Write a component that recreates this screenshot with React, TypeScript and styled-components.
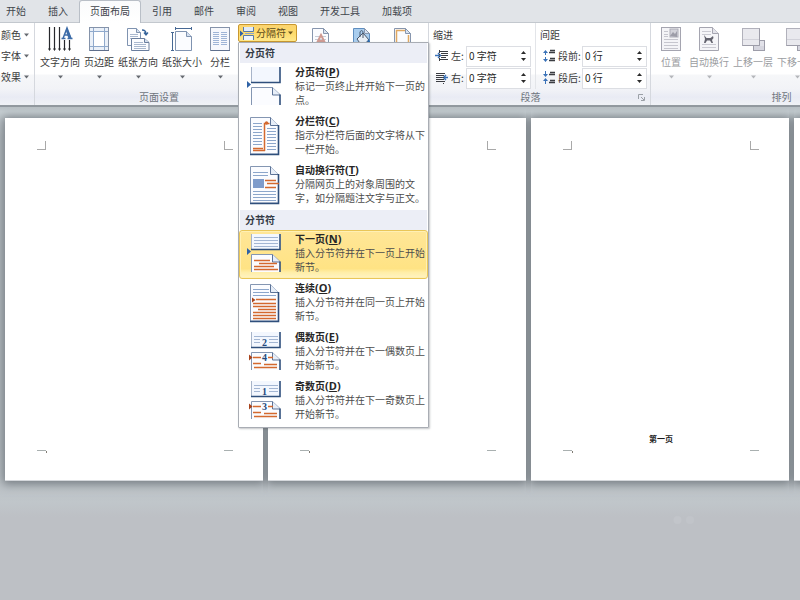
import React from "react";
import styled, { createGlobalStyle, css } from "styled-components";

const GlobalStyle = createGlobalStyle`
  * { box-sizing: border-box; }
  html, body { margin: 0; padding: 0; }
  body, button, input {
    font-family: "Noto Sans CJK SC", sans-serif;
    font-size: 10px;
    line-height: 14px;
    color: #3b3b3b;
  }
  button { margin: 0; padding: 0; border: 0; background: none; }
`;

const Window = styled.div`
  display: flex;
  flex-direction: column;
  min-height: 100vh;
  overflow: hidden;
  background: #bdc0c5;
`;

const TabBar = styled.nav`
  display: flex;
  height: 23px;
  margin-left: -5px;
  background: #e1e4e8;
  box-shadow: inset 0 -1px 0 #c3c8ce;
`;

const Tab = styled.button<{ $active?: boolean }>`
  flex: none;
  padding: 0 11px 2px;
  white-space: nowrap;
  color: #3f444b;
  ${(p) =>
    p.$active &&
    css`
      padding: 0 10px 2px;
      background: linear-gradient(#fafbfc, #ffffff);
      border: 1px solid #b9bfc7;
      border-bottom: 0;
      border-radius: 3px 3px 0 0;
    `}
`;

const Ribbon = styled.div`
  display: flex;
  height: 84px;
  background: linear-gradient(#ffffff 0, #ffffff 51px, #f6f7f9 52px, #f2f3f7 66px, #e9ebf4 74px, #f0f2f6 82px);
  border-bottom: 2px solid #92999f;
`;

const Group = styled.section<{ $width: number; $plain?: boolean }>`
  flex: none;
  display: flex;
  flex-direction: column;
  width: ${(p) => p.$width}px;
  border-right: 1px solid ${(p) => (p.$plain ? "transparent" : "#d5d8de")};
`;

const GroupBody = styled.div<{ $pad?: number; $gap?: number }>`
  flex: 1;
  display: flex;
  align-items: flex-start;
  gap: ${(p) => p.$gap ?? 4}px;
  padding-left: ${(p) => p.$pad ?? 5}px;
`;

const GroupCaption = styled.div`
  display: flex;
  height: 15px;
  color: #6f757d;
`;

const CaptionText = styled.span`
  flex: 1;
  text-align: center;
`;

const Launcher = styled.button`
  width: 18px;
  height: 14px;
  display: grid;
  place-items: center;
`;

const ThemeList = styled.div`
  display: flex;
  flex-direction: column;
  gap: 7px;
  padding-top: 5px;
`;

const ThemeButton = styled.button`
  display: flex;
  align-items: center;
  gap: 2px;
  white-space: nowrap;
`;

const BigButton = styled.button<{ $width: number; $dim?: boolean }>`
  flex: none;
  display: flex;
  flex-direction: column;
  align-items: center;
  width: ${(p) => p.$width}px;
  padding-top: 3px;
  white-space: nowrap;
  color: ${(p) => (p.$dim ? "#9b9da1" : "#3b3b3b")};
  & > span { margin: 3px 0 5px; }
`;

const Caret = ({ color = "#666a70" }: { color?: string }) => (
  <svg width="7" height="6" viewBox="0 0 7 6" aria-hidden="true">
    <path d="M1 1.500h5L3.500 4.500z" fill={color} />
  </svg>
);

const BreakAnchor = styled.div`
  position: relative;
  padding-top: 1px;
`;

const BreakButton = styled.button`
  display: flex;
  align-items: center;
  justify-content: space-between;
  width: 59px;
  height: 18px;
  padding: 0 2px 0 1px;
  white-space: nowrap;
  color: #5b4a1c;
  border: 1px solid #c9982f;
  border-radius: 2px;
  background: linear-gradient(#fbd46f, #fddb6c 50%, #ffe88a);
`;

const Menu = styled.div`
  position: absolute;
  z-index: 2;
  top: 19px;
  left: 0;
  width: 191px;
  padding-bottom: 1px;
  background: #ffffff;
  border: 1px solid #a9adb4;
  border-radius: 1px;
  box-shadow: 1px 1px 2px rgba(60, 66, 74, 0.3);
`;

const MenuHeading = styled.h2`
  margin: 0 1px;
  padding: 3px 0 3px 5px;
  font-size: 10px;
  line-height: 14px;
  font-weight: 700;
  color: #333a45;
  background: #eceef6;
`;

const MenuItem = styled.button<{ $selected?: boolean }>`
  display: grid;
  grid-template-columns: 40px auto;
  column-gap: 9px;
  align-items: start;
  width: 100%;
  height: 49px;
  padding: 1px 0 0 6px;
  text-align: left;
  border: 1px solid transparent;
  border-radius: 3px;
  ${(p) =>
    p.$selected &&
    css`
      border-color: #e9c658;
      background: linear-gradient(#ffe697, #ffe384 80%, #ffeea8 88%, #fff3c2);
      box-shadow: inset 0 0 0 1px #fff0b4;
    `}
`;

const ItemTitle = styled.strong`
  display: block;
  font-weight: 700;
  color: #262626;
`;

const AccessKey = styled.span`
  font-family: "Open Sans", sans-serif;
  font-size: 11px;
`;

const ItemText = styled.span`
  display: block;
  white-space: pre;
  color: #4c4c4c;
`;

const IconStrip = styled.div`
  display: flex;
  gap: 19px;
  padding: 4px 0 0 8px;
`;

const IconButton = styled.button`
  width: 22px;
  height: 24px;
`;

const Fields = styled.div<{ $divided?: boolean }>`
  flex: none;
  display: flex;
  flex-direction: column;
  padding: 5px 4px 0 0;
  border-right: 1px solid ${(p) => (p.$divided ? "#e3e5e9" : "transparent")};
`;

const FieldRow = styled.div`
  display: flex;
  align-items: center;
  height: 22px;
  padding-left: 2px;
`;

const FieldsTitle = styled.span`
  height: 17px;
`;

const FieldLabel = styled.label<{ $width: number }>`
  width: ${(p) => p.$width}px;
  padding-left: 2px;
  white-space: nowrap;
`;

const Spinner = styled.div`
  display: flex;
  width: 65px;
  height: 21px;
  background: #ffffff;
  border: 1px solid #dcdee3;
`;

const SpinnerInput = styled.input`
  flex: 1;
  min-width: 0;
  padding: 0 2px 1px;
  border: 0;
  outline: 0;
  background: transparent;
  color: #1f1f1f;
`;

const SpinnerArrows = styled.div`
  display: flex;
  flex-direction: column;
  width: 14px;
  padding: 2px 0;
`;

const SpinnerArrow = styled.button`
  flex: 1;
  display: grid;
  place-items: center;
`;

const Workspace = styled.main`
  flex: 1;
  background: linear-gradient(#b9c1c5 0, #c6ced2 5px, #b4babf 30px, #b4babf 340px, #c0c6ca 395px, #bdc0c5 410px);
`;

const Pages = styled.div`
  display: flex;
  gap: 5px;
  padding: 11px 0 0 5px;
`;

const Page = styled.article`
  flex: none;
  display: grid;
  grid-template-columns: 9px 1fr 9px;
  grid-template-rows: 9px 1fr 9px;
  width: 258px;
  height: 363px;
  padding: 23px 30px 22px 32px;
  background: #ffffff;
  border-bottom: 1px solid #d5d8dc;
  box-shadow: 0 1px 9px 2px #757c82;
  clip-path: inset(-12px -5px -30px -5px);
`;

const Corner = styled.i<{ $side: "left" | "right" }>`
  border-bottom: 1px solid #a9a9a9;
  border-${(p) => (p.$side === "left" ? "right" : "left")}: 1px solid #a9a9a9;
`;

const PageText = styled.p`
  grid-row: 2;
  grid-column: 1 / -1;
  align-self: end;
  margin: 0 0 4px;
  font-size: 8px;
  line-height: 12px;
  min-height: 12px;
  font-weight: 700;
  text-align: center;
  color: #1c1c1c;
`;

const FootMark = styled.i`
  grid-row: 3;
  height: 1px;
  margin-top: 1px;
  background: #a9b0b0;
`;

const FootCenter = styled.i`
  grid-row: 3;
  width: 1px;
  height: 2px;
  margin-top: 2px;
  background: #817c74;
`;

const Watermark = styled.div`
  display: flex;
  justify-content: flex-end;
  padding: 34px 105px 0 0;
`;

/* ---------- icons ---------- */

const sheet = { fill: "#fbfcff", stroke: "#7f93b0", strokeWidth: 1 };

const hLines = (x1: number, x2: number, ys: number[], color: string) =>
  ys.map((y) => <path key={`${x1}-${y}`} d={`M${x1} ${y + 0.5}H${x2}`} stroke={color} />);

const TextDirectionIcon = () => (
  <svg width="26" height="26" viewBox="0 0 26 26">
    <path d="M2.500 1v23M7.500 1v23M12.500 1v23M17.500 14v10M22.500 14v10" stroke="#26282c" strokeWidth="1.200" />
    <path d="M1 22.500h3L2.500 25zM6 22.500h3L7.500 25zM11 22.500h3L12.500 25zM16 22.500h3L17.500 25zM21 22.500h3L22.500 25z" fill="#26282c" />
    <path d="M14.500 12.500h4M20.500 12.500h5M16 12.500L20 2l4 10.500M17.500 9h5" fill="none" stroke="#3d6ca8" strokeWidth="1.500" />
    <path d="M20 1.500l4.500 11h-3L18.800 4.500z" fill="#3d6ca8" />
  </svg>
);

const MarginsIcon = () => (
  <svg width="22" height="26" viewBox="0 0 22 26">
    <rect x="1.500" y="1.500" width="19" height="23" fill="#eaf0f8" stroke="#8593aa" />
    <rect x="6" y="6" width="10" height="14" fill="#ffffff" />
    <path d="M5.500 2v22M16.500 2v22M2 5.500h18M2 20.500h18" stroke="#8fa9cc" />
    <path d="M2 24.500h19" stroke="#5f6f8c" />
  </svg>
);

const OrientationIcon = () => (
  <svg width="26" height="26" viewBox="0 0 26 26">
    <path d="M2.500 2.500h9l4 4v13h-13z" {...sheet} />
    <path d="M11.500 2.500v4h4" fill="#d5e0f0" stroke="#7f93b0" />
    {hLines(5, 13, [8, 10, 12], "#a9b8cf")}
    <path d="M17 4c3 0 4 1 4 4M19 6.500l2 2.500 2-2.500" fill="none" stroke="#37649b" strokeWidth="1.300" />
    <path d="M6.500 12.500h13l4.500 4v8H6.500z" {...sheet} stroke="#6a7e9e" />
    <path d="M19.500 12.500v4h4.500" fill="#d5e0f0" stroke="#6a7e9e" />
    {hLines(9, 18, [16], "#a9b8cf")}
    {hLines(9, 21, [18, 20, 22], "#a9b8cf")}
  </svg>
);

const SizeIcon = () => (
  <svg width="24" height="26" viewBox="0 0 24 26">
    <path d="M5.500 5.500h11l5 5v14h-16z" {...sheet} />
    <path d="M16.500 5.500v5h5" fill="#d5e0f0" stroke="#7f93b0" />
    <path d="M5 2.500h17M5.500 1v3M21.500 1v3M2.500 6v19M1 6.500h3M1 24.500h3" stroke="#466894" />
  </svg>
);

const ColumnsIcon = () => (
  <svg width="22" height="26" viewBox="0 0 22 26">
    <rect x="1.500" y="1.500" width="19" height="23" fill="#f6f8fc" stroke="#8593aa" />
    {hLines(4, 10, [6, 8, 10, 12, 14, 16, 18], "#9fb5d6")}
    {hLines(12, 18, [6, 8, 10, 12, 14, 16, 18], "#9fb5d6")}
    <path d="M2 24.500h19" stroke="#5f6f8c" />
  </svg>
);

const BreakIcon = () => (
  <svg width="15" height="15" viewBox="0 0 15 15">
    <path d="M3.500 1v4.500h10V1z" fill="#dfeaf8" />
    <path d="M3.500 14V9.500h10V14z" fill="#eef4fc" />
    <path d="M3.500 1v4.500h10V1M3.500 14V9.500h10V14" fill="none" stroke="#5779a8" />
    <path d="M0 4.500L3.500 7.500 0 10.500z" fill="#2f62a6" />
    <path d="M5 7.500h9" stroke="#87a3cc" />
  </svg>
);

const SmallSheet = ({ children, stroke = "#8796ae" }: { children: React.ReactNode; stroke?: string }) => (
  <svg width="22" height="24" viewBox="0 0 22 24">
    <path d="M2.500 1.500h11l5 5v17h-16z" fill="#fbfcff" stroke={stroke} />
    {children}
    <path d="M13.500 1.500v5h5z" fill="#d9e3f1" stroke="#8796ae" />
  </svg>
);

const TallSheet = () => (
  <>
    <path d="M4.500 3.500h20l8 8V40h-28z" fill="#fbfcff" stroke="#8496b2" />
    <path d="M24.500 3.500v8h8" fill="#e7eef8" stroke="#5c7397" />
    <path d="M32.500 11v29.500H4" fill="none" stroke="#2f4f7c" strokeWidth="1.600" />
  </>
);

const SplitSheets = ({ children, arrow = true }: { children?: React.ReactNode; arrow?: boolean }) => (
  <svg width="40" height="44" viewBox="0 0 40 44">
    <path d="M5.500 2h29v15h-29z" fill="#f3f7fe" />
    <path d="M5.500 2v15" stroke="#a7b4c9" />
    <path d="M34 2v15.500H5" fill="none" stroke="#2f4f7c" strokeWidth="1.600" />
    <path d="M5.500 40V22.500h21l7.500 7.500v10z" fill="#fbfcff" />
    <path d="M5.500 40V22.500h21l8 7.500" fill="none" stroke="#8496b2" />
    <path d="M26.500 22.500V30H34" fill="#e7eef8" stroke="#5c7397" />
    <path d="M34 29.500V40" stroke="#2f4f7c" strokeWidth="1.600" />
    {arrow && <path d="M1 16l4 3.500L1 23z" fill="#2f62a6" />}
    {children}
  </svg>
);

const PageBreakArt = () => <SplitSheets />;

const ColumnBreakArt = () => (
  <svg width="40" height="44" viewBox="0 0 40 44">
    <TallSheet />
    {hLines(7, 16, [9, 12, 15, 18, 21, 24, 27, 30], "#8ca6cb")}
    {hLines(21, 30, [14, 17, 20, 23, 26, 29, 32, 35], "#8ca6cb")}
    <path d="M7 34.500h10M7 36.500h12M18.500 37V9.500h5" fill="none" stroke="#d4692f" strokeWidth="1.500" />
    <circle cx="20.500" cy="9" r="1.700" fill="#d4692f" />
  </svg>
);

const WrapBreakArt = () => (
  <svg width="40" height="44" viewBox="0 0 40 44">
    <TallSheet />
    {hLines(7, 22, [9, 12], "#8ca6cb")}
    <rect x="7" y="16" width="11" height="9" fill="#7f9ccb" />
    <path d="M19 17.500h11M21 20.500h12M19 24.500h11" stroke="#d4692f" strokeWidth="1.400" />
    {hLines(7, 30, [28, 31, 34, 37], "#8ca6cb")}
  </svg>
);

const NextPageArt = () => (
  <SplitSheets>
    {hLines(8, 32, [5, 8, 11, 14], "#a3b6d3")}
    <path d="M8 28.500h16M13 31.500h18M8 34.500h20M8 37.500h24" stroke="#d4692f" strokeWidth="1.300" />
  </SplitSheets>
);

const ContinuousArt = () => (
  <svg width="40" height="44" viewBox="0 0 40 44">
    <TallSheet />
    {hLines(7, 23, [8, 11], "#8ca6cb")}
    {hLines(7, 30, [14], "#8ca6cb")}
    <path d="M6 16.500l3.500 2.500L6 21.500z" fill="#a8431b" />
    <path d="M10 18.500h20M7 22.500h23M7 25.500h23M12 28.500h18M7 31.500h23M7 34.500h23M7 37.500h23" stroke="#d4692f" strokeWidth="1.300" />
  </svg>
);

const NumberedArt = ({ top, bottom }: { top: string; bottom: string }) => (
  <SplitSheets arrow={false}>
    {hLines(8, 32, [6], "#a3b6d3")}
    {hLines(8, 14, [9, 12], "#a3b6d3")}
    {hLines(23, 32, [9, 12], "#a3b6d3")}
    <text x="18.500" y="16" textAnchor="middle" fontSize="10" fontWeight="700" fontFamily="Liberation Serif, serif" fill="#24497d">
      {top}
    </text>
    <path d="M3 24.500l3.500 3-3.500 3z" fill="#a8431b" />
    <path d="M7 27.500h8M22 27.500h5M7 33.500h8M18 34.500h13M8 37.500h23" stroke="#d4692f" strokeWidth="1.300" />
    <text x="18.500" y="31" textAnchor="middle" fontSize="10" fontWeight="700" fontFamily="Liberation Serif, serif" fill="#24497d">
      {bottom}
    </text>
  </SplitSheets>
);

const IndentIcon = ({ right }: { right?: boolean }) => (
  <svg width="14" height="14" viewBox="0 0 14 14">
    {right ? (
      <>
        <path d="M1 2.500h9M1 4.500h7M1 6.500h7M1 8.500h7M1 10.500h9" stroke="#3b3d42" />
        <path d="M13 6.500H9M11 4L8.500 6.500 11 9" fill="none" stroke="#3a72b8" strokeWidth="1.400" />
        <path d="M8.500 2v11" stroke="#3b3d42" strokeDasharray="1 1" />
      </>
    ) : (
      <>
        <path d="M4 2.500h9M6 4.500h7M6 6.500h7M6 8.500h5M4 10.500h9" stroke="#3b3d42" />
        <path d="M0 6.500h5M3 4l2.500 2.500L3 9" fill="none" stroke="#3a72b8" strokeWidth="1.400" />
        <path d="M4.500 1v12" stroke="#3b3d42" strokeDasharray="1 1" />
      </>
    )}
  </svg>
);

const SpacingIcon = ({ after }: { after?: boolean }) => (
  <svg width="14" height="14" viewBox="0 0 14 14">
    {after ? (
      <path d="M1 3h5L3.500 6zM1 10h5L3.500 7zM3 0h1v3H3zM3 10h1v3H3z" fill="#3a72b8" />
    ) : (
      <path d="M1 4h5L3.500 1zM1 10h5L3.500 13zM3 4h1v2H3zM3 8h1v2H3z" fill="#3a72b8" />
    )}
    <path d="M8 1.500h5M7 3.500h6M8 9.500h5M7 11.500h6" stroke="#3b3d42" strokeWidth="1.300" />
  </svg>
);

const LauncherIcon = () => (
  <svg width="7" height="7" viewBox="0 0 7 7">
    <path d="M.5 5V.5H5M3 3l3 3M6.500 3v3.500H3" fill="none" stroke="#9ba0a7" />
  </svg>
);

const PositionIcon = () => (
  <svg width="22" height="26" viewBox="0 0 22 26">
    <rect x="1.500" y="1.500" width="19" height="23" fill="#f4f4f7" stroke="#a5a5b0" />
    <rect x="10" y="3" width="8" height="8" fill="#d3d3da" stroke="#adadb8" />
    <path d="M10 10l3-4 2 2 2-3v6z" fill="#9d9da8" />
    {hLines(4, 8, [5, 8, 10], "#c6c6ce")}
    {hLines(4, 18, [13, 16, 19, 22], "#c6c6ce")}
  </svg>
);

const WrapIcon = () => (
  <svg width="22" height="26" viewBox="0 0 22 26">
    <path d="M1.500 1.500h13l6 6v17h-19z" fill="#f5f5f8" stroke="#a5a5b0" />
    <path d="M14.500 1.500v6h6" fill="#e3e3ea" stroke="#a5a5b0" />
    {hLines(4, 13, [5, 8], "#cacad2")}
    {hLines(4, 18, [18, 21], "#cacad2")}
    <path d="M6 9l2.500 3h4L15 10l.5 2-1.500 2 1 3h-1.500l-1.500-2.500H9L7.500 17H6l1-4z" fill="#62626d" />
  </svg>
);

const LayerIcon = () => (
  <svg width="26" height="26" viewBox="0 0 26 26">
    <rect x="13.500" y="14.500" width="11" height="10" fill="#e2e2e9" stroke="#9d9da9" />
    <rect x="2.500" y="2.500" width="17" height="17" fill="#e9e9ee" stroke="#b1b1bb" />
    <path d="M3 13.500h16" stroke="#d2d2da" />
    <path d="M2.500 19.500h17v-17" fill="none" stroke="#9d9da9" />
    <path d="M14 20h10v4H14z" fill="#d6d6df" />
  </svg>
);

/* ---------- data ---------- */

const tabs = ["开始", "插入", "页面布局", "引用", "邮件", "审阅", "视图", "开发工具", "加载项"];

const setupButtons = [
  { label: "文字方向", width: 40, icon: <TextDirectionIcon /> },
  { label: "页边距", width: 30, icon: <MarginsIcon /> },
  { label: "纸张方向", width: 40, icon: <OrientationIcon /> },
  { label: "纸张大小", width: 40, icon: <SizeIcon /> },
  { label: "分栏", width: 28, icon: <ColumnsIcon /> },
];

const arrangeButtons = [
  { label: "位置", width: 28, icon: <PositionIcon /> },
  { label: "自动换行", width: 40, icon: <WrapIcon /> },
  { label: "上移一层", width: 40, icon: <LayerIcon /> },
  { label: "下移一层", width: 40, icon: <LayerIcon /> },
];

const menuSections = [
  {
    title: "分页符",
    items: [
      { name: "分页符", key: "P", text: "标记一页终止并开始下一页的\n点。", art: <PageBreakArt /> },
      { name: "分栏符", key: "C", text: "指示分栏符后面的文字将从下\n一栏开始。", art: <ColumnBreakArt /> },
      { name: "自动换行符", key: "T", text: "分隔网页上的对象周围的文\n字，如分隔题注文字与正文。", art: <WrapBreakArt /> },
    ],
  },
  {
    title: "分节符",
    items: [
      { name: "下一页", key: "N", text: "插入分节符并在下一页上开始\n新节。", art: <NextPageArt />, selected: true },
      { name: "连续", key: "O", text: "插入分节符并在同一页上开始\n新节。", art: <ContinuousArt /> },
      { name: "偶数页", key: "E", text: "插入分节符并在下一偶数页上\n开始新节。", art: <NumberedArt top="2" bottom="4" /> },
      { name: "奇数页", key: "D", text: "插入分节符并在下一奇数页上\n开始新节。", art: <NumberedArt top="1" bottom="3" /> },
    ],
  },
];

const pages = ["", "", "第一页", ""];

/* ---------- parts ---------- */

type FieldProps = { id: string; label: string; value: string; icon: React.ReactNode; labelWidth: number };

const SpinField = ({ id, label, value, icon, labelWidth }: FieldProps) => (
  <FieldRow>
    {icon}
    <FieldLabel htmlFor={id} $width={labelWidth}>
      {label}
    </FieldLabel>
    <Spinner>
      <SpinnerInput id={id} defaultValue={value} />
      <SpinnerArrows>
        <SpinnerArrow aria-label="增加">
          <svg width="5" height="3" viewBox="0 0 5 3"><path d="M0 3h5L2.500 0z" fill="#2b2b2b" /></svg>
        </SpinnerArrow>
        <SpinnerArrow aria-label="减少">
          <svg width="5" height="3" viewBox="0 0 5 3"><path d="M0 0h5L2.500 3z" fill="#2b2b2b" /></svg>
        </SpinnerArrow>
      </SpinnerArrows>
    </Spinner>
  </FieldRow>
);

const BreakMenu = () => (
  <Menu>
    {menuSections.map((section) => (
      <React.Fragment key={section.title}>
        <MenuHeading>{section.title}</MenuHeading>
        {section.items.map((item) => (
          <MenuItem key={item.key} $selected={"selected" in item}>
            {item.art}
            <span>
              <ItemTitle>
                {item.name}
                <AccessKey>
                  (<u>{item.key}</u>)
                </AccessKey>
              </ItemTitle>
              <ItemText>{item.text}</ItemText>
            </span>
          </MenuItem>
        ))}
      </React.Fragment>
    ))}
  </Menu>
);

export default function App() {
  return (
    <Window>
      <GlobalStyle />
      <TabBar>
        {tabs.map((tab) => (
          <Tab key={tab} $active={tab === "页面布局"}>
            {tab}
          </Tab>
        ))}
      </TabBar>

      <Ribbon>
        <Group $width={35}>
          <GroupBody $pad={1}>
            <ThemeList>
              {["颜色", "字体", "效果"].map((label) => (
                <ThemeButton key={label}>
                  {label}
                  <Caret />
                </ThemeButton>
              ))}
            </ThemeList>
          </GroupBody>
        </Group>

        <Group $width={267} $plain>
          <GroupBody>
            {setupButtons.map((b) => (
              <BigButton key={b.label} $width={b.width}>
                {b.icon}
                <span>{b.label}</span>
                <Caret />
              </BigButton>
            ))}
            <BreakAnchor>
              <BreakButton aria-expanded="true">
                <BreakIcon />
                分隔符
                <Caret color="#6b5520" />
              </BreakButton>
              <BreakMenu />
            </BreakAnchor>
          </GroupBody>
          <GroupCaption>
            <CaptionText>页面设置</CaptionText>
            <Launcher aria-label="页面设置选项">
              <LauncherIcon />
            </Launcher>
          </GroupCaption>
        </Group>

        <Group $width={127}>
          <IconStrip>
            <IconButton aria-label="水印">
              <SmallSheet>
                {hLines(5, 16, [9, 12, 15], "#c5cbd6")}
                <path d="M6 18l5-10 5 10M8 14h6" fill="none" stroke="#cf9a92" strokeWidth="2" />
              </SmallSheet>
            </IconButton>
            <IconButton aria-label="页面颜色">
              <SmallSheet stroke="#5f8ec0">
                <path d="M3 2h10v5h5v16H3z" fill="#a9cdee" />
                <path d="M6 12l6-6 6 7-7 6z" fill="#e8eef5" stroke="#47566c" />
                <path d="M9 10V5c1-2 3-2 3 1v5" fill="none" stroke="#47566c" />
                <path d="M17 12c2 2 3 4 2 7-2 0-3-3-2-7z" fill="#2767ad" />
              </SmallSheet>
            </IconButton>
            <IconButton aria-label="页面边框">
              <SmallSheet>
                <path d="M4.500 23V3.500H13M16.500 8v15" fill="none" stroke="#e0a862" strokeWidth="1.500" />
              </SmallSheet>
            </IconButton>
          </IconStrip>
        </Group>

        <Group $width={222}>
          <GroupBody $pad={4}>
            <Fields $divided>
              <FieldsTitle>缩进</FieldsTitle>
              <SpinField id="indent-left" label="左:" value="0 字符" labelWidth={17} icon={<IndentIcon />} />
              <SpinField id="indent-right" label="右:" value="0 字符" labelWidth={17} icon={<IndentIcon right />} />
            </Fields>
            <Fields>
              <FieldsTitle>间距</FieldsTitle>
              <SpinField id="space-before" label="段前:" value="0 行" labelWidth={26} icon={<SpacingIcon />} />
              <SpinField id="space-after" label="段后:" value="0 行" labelWidth={26} icon={<SpacingIcon after />} />
            </Fields>
          </GroupBody>
          <GroupCaption>
            <CaptionText>段落</CaptionText>
            <Launcher aria-label="段落选项">
              <LauncherIcon />
            </Launcher>
          </GroupCaption>
        </Group>

        <Group $width={262}>
          <GroupBody $pad={6}>
            {arrangeButtons.map((b) => (
              <BigButton key={b.label} $width={b.width} $dim>
                {b.icon}
                <span>{b.label}</span>
                <Caret color="#b4b6ba" />
              </BigButton>
            ))}
          </GroupBody>
          <GroupCaption>
            <CaptionText>排列</CaptionText>
          </GroupCaption>
        </Group>
      </Ribbon>

      <Workspace>
        <Pages>
          {pages.map((text, i) => (
            <Page key={i}>
              <Corner $side="left" />
              <i />
              <Corner $side="right" />
              <PageText>{text}</PageText>
              <FootMark />
              <FootCenter />
              <FootMark />
            </Page>
          ))}
        </Pages>
        <Watermark>
          <svg width="22" height="10" viewBox="0 0 22 10" aria-hidden="true">
            <circle cx="4.500" cy="5" r="4" fill="#c2c5ca" />
            <circle cx="17" cy="5" r="4" fill="#c1c4c9" />
          </svg>
        </Watermark>
      </Workspace>
    </Window>
  );
}
